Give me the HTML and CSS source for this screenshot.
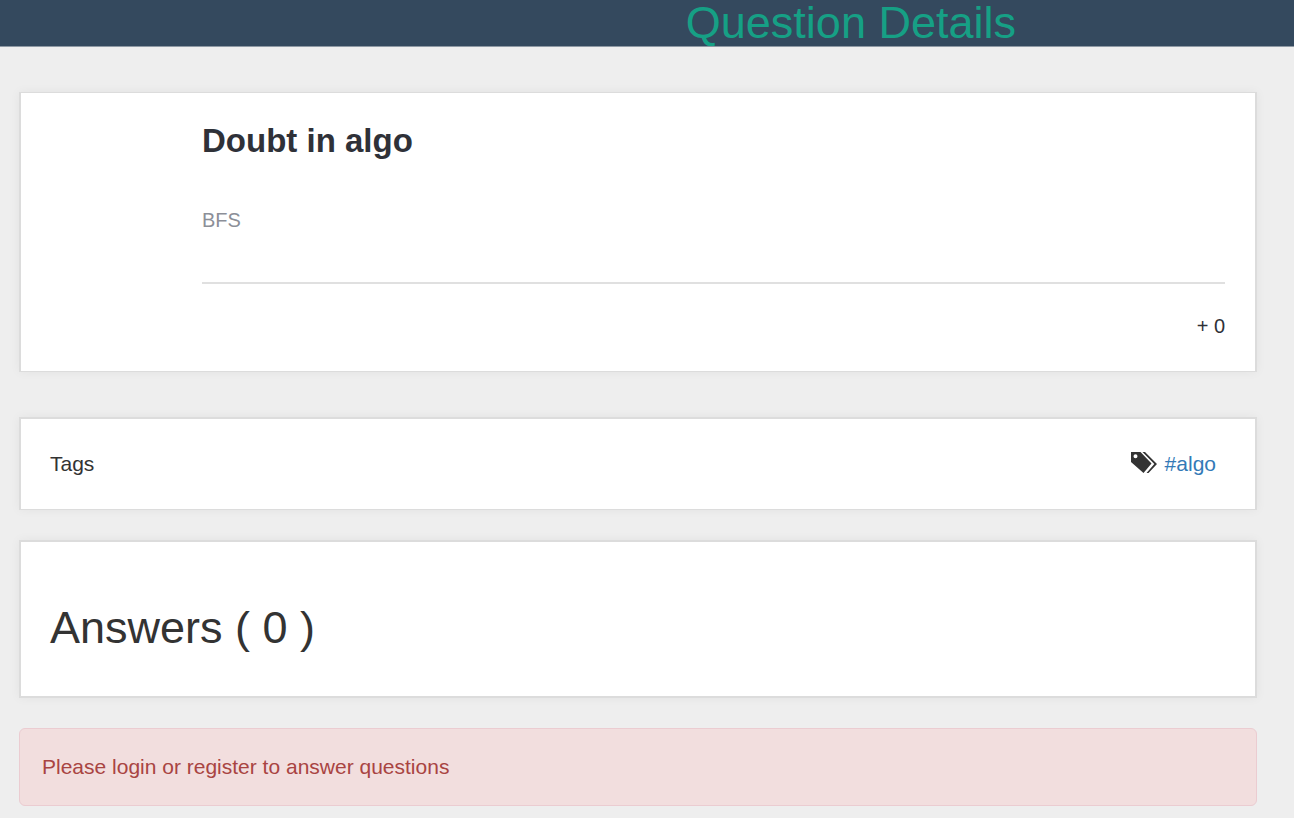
FILE: index.html
```html
<!DOCTYPE html>
<html lang="en">
<head>
<meta charset="utf-8">
<title>Question Details</title>
<link rel="stylesheet" href="styles.css">
</head>
<body>
<header class="topbar"><h1 class="topbar-title">Question Details</h1></header>
<main class="content">
  <article class="card question">
    <h2 class="question-title">Doubt in algo</h2>
    <p class="question-text">BFS</p>
    <p class="votes">+ 0</p>
  </article>
  <section class="card tags">
    <span>Tags</span>
    <span class="tag-list">
      <svg class="tag-icon" viewBox="0 0 26 21" aria-hidden="true">
        <path fill="#333" fill-rule="evenodd" d="M0 0H9.500L20.500 11.500L12.500 21L0 10ZM4.500 2.300A2 2 0 1 0 4.500 6.300A2 2 0 1 0 4.500 2.300Z"/>
        <path fill="#333" d="M11.500 0H14L26 12L17.500 21H15.500L23.300 12Z"/>
      </svg>
      <a class="tag-link" href="#algo">#algo</a>
    </span>
  </section>
  <section class="card answers">
    <h2 class="answers-title">Answers ( 0 )</h2>
  </section>
  <div class="alert" role="alert">Please login or register to answer questions</div>
</main>
</body>
</html>
```
FILE: styles.css
```css
* { box-sizing: border-box; }
body {
  margin: 0;
  background: #eee;
  color: #333;
  font: 21px/30px "Liberation Sans", Arial, sans-serif;
}
h1, h2, p { margin: 0; font-weight: 400; }
.topbar {
  padding-left: 53%;
  background: #34495e;
  border-bottom: 1px solid #8e99a4;
}
.topbar-title { color: #16a085; font-size: 45px; line-height: 46px; }
.content { padding: 45px 37px 12px 19px; }
.card {
  background: #fff;
  border: 2px solid #dcdcdc;
  box-shadow: 0 0 10px rgba(0, 0, 0, 0.05);
}
.question {
  margin-bottom: 45px;
  padding: 28px 30px 30px 181px;
  border-width: 1px 2px;
}
.question-title {
  margin-bottom: 44px;
  color: #2f3138;
  font-size: 33px;
  line-height: 40px;
  font-weight: 700;
}
.question-text {
  padding-bottom: 47px;
  border-bottom: 2px solid #e0e0e0;
  color: #8c8f98;
  font-size: 20px;
}
.votes { padding-top: 27px; color: #2f3138; font-size: 20px; text-align: right; }
.tags {
  display: flex;
  align-items: center;
  justify-content: space-between;
  margin-bottom: 30px;
  padding: 30px 39px 30px 29px;
  border-bottom-width: 1px;
}
.tag-list { display: flex; align-items: center; gap: 8px; }
.tag-icon { width: 26px; height: 21px; margin-bottom: 4px; }
.tag-link { color: #337ab7; text-decoration: none; }
.answers { margin-bottom: 30px; padding: 61px 29px 43px; }
.answers-title { font-size: 45px; line-height: 50px; }
.alert {
  padding: 23px 22px;
  border: 1px solid #ebccd1;
  border-radius: 6px;
  background: #f2dede;
  color: #a94442;
}
```
